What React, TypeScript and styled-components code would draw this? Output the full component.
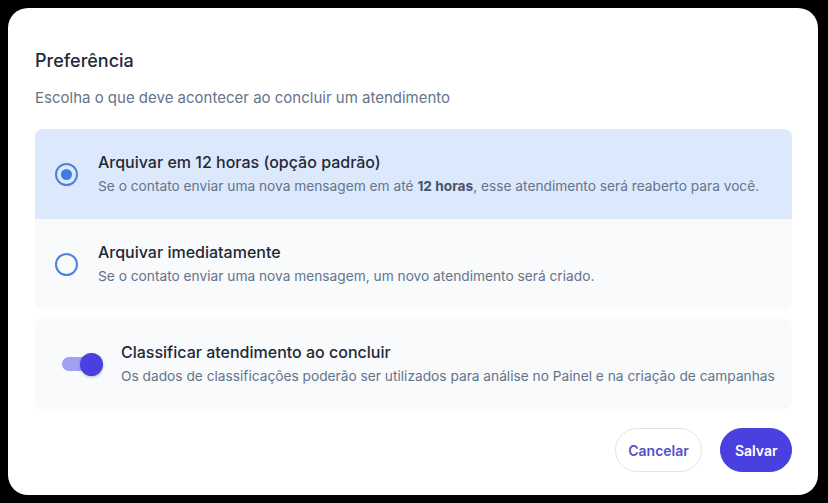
import React, { useState } from "react";
import styled, { createGlobalStyle } from "styled-components";

const Global = createGlobalStyle`
  html, body { margin: 0; padding: 0; background: #000; }
  body { font-family: Inter, "Noto Sans", sans-serif; -webkit-font-smoothing: antialiased; }
  * { box-sizing: border-box; }
`;

const Page = styled.div`
  width: 828px;
  height: 503px;
  padding: 8px 10px 8px 8px;
  background: #000;
`;

const Modal = styled.div`
  width: 810px;
  height: 487px;
  background: #fff;
  border-radius: 20px;
  padding: 41px 26px 23px 27px;
  display: flex;
  flex-direction: column;
`;

const Title = styled.h2`
  margin: 0;
  font-size: 18px;
  line-height: 24px;
  font-weight: 500;
  color: #1e293b;
`;

const Subtitle = styled.p`
  margin: 14px 0 0;
  font-size: 15px;
  line-height: 22px;
  color: #64748b;
`;

const OptionGroup = styled.div`
  margin-top: 20px;
  display: flex;
  flex-direction: column;
  border-radius: 8px;
  overflow: hidden;
`;

const OptionRow = styled.label<{ $selected: boolean }>`
  height: 90px;
  display: flex;
  align-items: center;
  gap: 20px;
  padding-left: 20px;
  background: ${(p) => (p.$selected ? "#dce9fc" : "#f8fafc")};
  cursor: pointer;
`;

const Radio = styled.span<{ $checked: boolean }>`
  width: 23px;
  height: 23px;
  flex: none;
  border-radius: 50%;
  border: 2px solid #4a80de;
  display: flex;
  align-items: center;
  justify-content: center;
  &::after {
    content: "";
    width: 11px;
    height: 11px;
    border-radius: 50%;
    background: #3f7ae6;
    display: ${(p) => (p.$checked ? "block" : "none")};
  }
`;

const TextBlock = styled.div`
  display: flex;
  flex-direction: column;
  gap: 4px;
`;

const ItemTitle = styled.div`
  font-size: 16px;
  line-height: 20px;
  font-weight: 500;
  color: #1f2937;
`;

const ItemDesc = styled.div`
  font-size: 13.72px;
  line-height: 20px;
  color: #64748b;
  b { font-weight: 700; color: #475569; }
`;

const ToggleCard = styled.div`
  margin-top: 10px;
  height: 90px;
  border-radius: 8px;
  background: #f8fafc;
  display: flex;
  align-items: center;
  gap: 17px;
  padding-left: 27px;
`;

const Switch = styled.button<{ $on: boolean }>`
  position: relative;
  width: 42px;
  height: 24px;
  flex: none;
  padding: 0;
  border: none;
  background: transparent;
  cursor: pointer;
  &::before {
    content: "";
    position: absolute;
    left: 0;
    top: 5px;
    width: 36px;
    height: 14px;
    border-radius: 7px;
    background: ${(p) => (p.$on ? "#a3a0f3" : "#cbd5e1")};
  }
  &::after {
    content: "";
    position: absolute;
    top: 1px;
    left: ${(p) => (p.$on ? "18px" : "0")};
    width: 23px;
    height: 23px;
    border-radius: 50%;
    background: ${(p) => (p.$on ? "#4a40e0" : "#fff")};
    box-shadow: 0 1px 3px rgba(0, 0, 0, 0.25);
  }
`;

const Footer = styled.div`
  margin-top: auto;
  display: flex;
  justify-content: flex-end;
  gap: 18px;
`;

const Button = styled.button<{ $primary?: boolean }>`
  height: 44px;
  padding: 0 ${(p) => (p.$primary ? 13.5 : 12.5)}px;
  border-radius: 22px;
  font-family: Inter, sans-serif;
  font-size: 14px;
  font-weight: 600;
  cursor: pointer;
  border: 1px solid ${(p) => (p.$primary ? "#4a40e0" : "#e2e4ea")};
  background: ${(p) => (p.$primary ? "#4a40e0" : "#fff")};
  color: ${(p) => (p.$primary ? "#fff" : "#5750c8")};
`;

export default function App() {
  const [choice, setChoice] = useState(0);
  const [on, setOn] = useState(true);
  return (
    <Page>
      <Global />
      <Modal>
        <Title>Preferência</Title>
        <Subtitle>Escolha o que deve acontecer ao concluir um atendimento</Subtitle>
        <OptionGroup>
          <OptionRow $selected={choice === 0} onClick={() => setChoice(0)}>
            <Radio $checked={choice === 0} />
            <TextBlock>
              <ItemTitle>Arquivar em 12 horas (opção padrão)</ItemTitle>
              <ItemDesc>
                Se o contato enviar uma nova mensagem em até <b>12 horas</b>, esse atendimento será reaberto para você.
              </ItemDesc>
            </TextBlock>
          </OptionRow>
          <OptionRow $selected={choice === 1} onClick={() => setChoice(1)}>
            <Radio $checked={choice === 1} />
            <TextBlock>
              <ItemTitle>Arquivar imediatamente</ItemTitle>
              <ItemDesc>Se o contato enviar uma nova mensagem, um novo atendimento será criado.</ItemDesc>
            </TextBlock>
          </OptionRow>
        </OptionGroup>
        <ToggleCard>
          <Switch $on={on} onClick={() => setOn(!on)} aria-label="toggle" />
          <TextBlock>
            <ItemTitle>Classificar atendimento ao concluir</ItemTitle>
            <ItemDesc>
              Os dados de classificações poderão ser utilizados para análise no Painel e na criação de campanhas
            </ItemDesc>
          </TextBlock>
        </ToggleCard>
        <Footer>
          <Button>Cancelar</Button>
          <Button $primary>Salvar</Button>
        </Footer>
      </Modal>
    </Page>
  );
}
